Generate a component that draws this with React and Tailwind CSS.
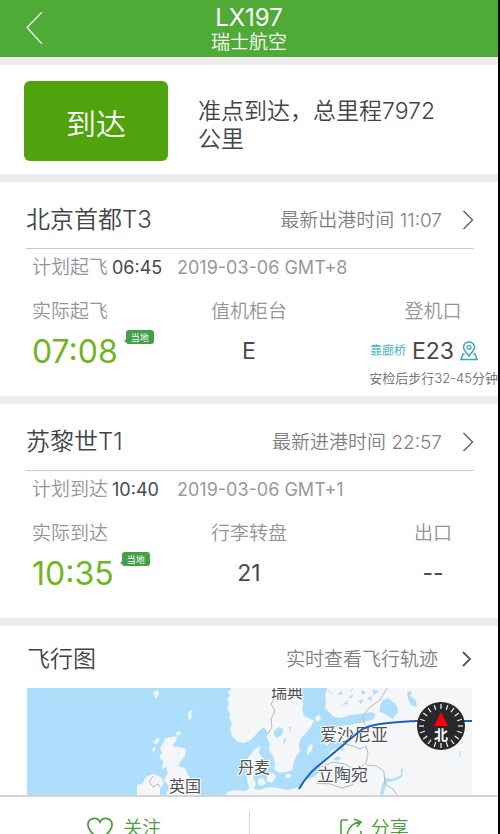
const fontStack = 'font-["Inter","Noto_Sans_CJK_SC",sans-serif]';

function Chevron() {
  return (
    <svg className="h-5 w-3 shrink-0" viewBox="0 0 12 20" fill="none" stroke="#66666a" strokeWidth="1.5">
      <path d="M1.5 1 10.5 10 1.5 19" />
    </svg>
  );
}

function LocalTag() {
  return (
    <span className="relative mt-1 flex h-[14px] w-7 items-center justify-center rounded-[3px] bg-[#43a047] text-[9px] font-normal leading-none text-white">
      <svg className="absolute -left-0.5 bottom-0 h-2 w-2" viewBox="0 0 8 8" fill="#43a047">
        <path d="M3 0 2.500 3 0 5 3 7 4 8H8V0Z" />
      </svg>
      <span className="relative">当地</span>
    </span>
  );
}

function PinIcon() {
  return (
    <svg className="h-5 w-[18px] shrink-0" viewBox="0 0 18 20" fill="none" stroke="#38a6bb" strokeWidth="1.5">
      <path d="M9 15C6.500 11.500 3.500 9 3.500 6.200a5.500 5.200 0 0 1 11 0C14.500 9 11.500 11.500 9 15Z" />
      <circle cx="9" cy="6.300" r="2" strokeWidth="1.200" />
      <path d="M4.500 13H3L1 18.500H17L15 13h-1.500" />
    </svg>
  );
}

function AirportSection({ airport, latestLabel, latest, planLabel, plan, date, actualLabel, actual, middleLabel, middle, lastLabel, children }) {
  return (
    <section className="flex h-[214px] shrink-0 flex-col bg-white">
      <div className="mx-[26px] mr-6 flex h-[67px] items-center border-b border-[#c9c9cb] pt-[10px]">
        <h2 className="text-[24px] leading-8 text-[#444446]">{airport}</h2>
        <a href="#latest" className="ml-auto flex items-center gap-5 text-[19px] leading-7 text-[#808084]">
          <span className="pt-0.5">{latestLabel} <span>{latest}</span></span>
          <Chevron />
        </a>
      </div>
      <p className="flex items-center pl-8 pt-[5px] text-[19px] leading-7 text-[#949498]">
        <span>{planLabel}</span>
        <time className="ml-1 w-[65px] text-[18px] font-normal text-[#48484a]">{plan}</time>
        <span className="text-[18px] font-normal text-[#98989c]">{date}</span>
      </p>
      <dl className="grid grid-cols-3 pt-4">
        <div className="pl-8">
          <dt className="text-[19px] leading-7 text-[#949498]">{actualLabel}</dt>
          <dd className="flex text-[32px] font-normal leading-[52px] text-[#6fb521]">
            <span className="mr-2">{actual}</span>
            <LocalTag />
          </dd>
        </div>
        <div className="text-center">
          <dt className="text-[19px] leading-7 text-[#949498]">{middleLabel}</dt>
          <dd className="text-[23px] font-normal leading-[50px] text-[#48484a]">{middle}</dd>
        </div>
        <div className="pl-9">
          <dt className="text-center text-[19px] leading-7 text-[#949498]">{lastLabel}</dt>
          <dd className="text-center text-[23px] font-normal leading-[50px] text-[#48484a]">{children}</dd>
        </div>
      </dl>
    </section>
  );
}

function FlightMap() {
  const ticks = Array.from({ length: 20 }, (_, i) => i * 18);
  return (
    <svg className="block h-[107px] w-full" viewBox="27 688 445 107" preserveAspectRatio="xMidYMid slice" role="img" aria-label="飞行图">
      <rect x="27" y="688" width="445" height="107" fill="#addffd" />
      <g fill="#f5f6f8">
        <path d="M232 688 228 692 230 696 227 699 229 704 227 708 230 714 229 718 232 723 230 730 232 736 237 741 243 743 249 741 254 737 259 731 264 727 267 731 267 738 270 744 269 750 273 756 275 763 274 769 279 773 286 772 292 770 294 762 296 756 300 751 299 744 301 738 306 733 310 728 314 721 309 718 305 717 302 710 303 704 301 698 302 688Z" />
        <path d="M327 688 325 696 326 702 325 708 330 713 334 717 341 718 350 715 361 714 372 712 376 715 372 720 360 723 350 725 338 726 330 730 327 734 332 739 340 740 344 745 343 751 336 748 331 751 326 758 321 764 319 773 314 777 306 780 299 787 288 790 278 788 270 787 258 790 250 788 245 791 235 790 228 792 225 795H472V688Z" />
        <path d="M248 758 254 750 260 746 259 754 263 758 260 766 254 772 253 778 256 784 253 790 250 789 247 780 247 770ZM258 779 263 778 266 783 262 786 258 784ZM267 775 273 773 276 777 272 783 267 781ZM286 774 291 774 290 778 286 778Z" />
        <path d="M166 738 177 736 176 741 172 746 179 747 186 749 185 756 181 761 178 766 185 768 188 775 192 780 198 789 201 795H166L169 786 164 780 168 773 166 767 162 769 163 761 159 757 162 753 160 748Z" />
        <path d="M137 785 142 784 146 777 153 774 161 777 164 783 160 788 160 795H137Z" />
        <path d="M153 743 157 738 160 739 157 744ZM152 749 156 746 154 753ZM176 733 179 731 181 734 177 736ZM188 714 190 711 193 709 191 714 192 717 189 721ZM153 692 158 690 159 694 156 699Z" />
        <path d="M307 752 308 747 311 744 313 746 311 751 308 755ZM315 717 319 715 321 719 317 722ZM325 740 328 738 330 743 326 746Z" />
      </g>
      <g fill="#addffd">
        <path d="M380 706 383 700 388 698 393 702 397 706 398 712 393 719 385 714 380 712ZM407 692 412 691 410 696 416 700 417 707 411 705 408 699ZM274 731 279 727 283 729 282 735 277 738 274 735ZM283 743 285 737 286 739 284 745ZM289 727 291 727 290 734ZM333 759 338 756 341 758 337 761Z" />
        <path d="M337 694 342 691 342 695ZM348 698 353 694 352 698ZM342 705 347 701 348 704ZM361 690 366 692 362 695ZM358 701 364 699 361 704ZM367 698 372 696 371 701ZM372 690 379 691 374 695Z" />
        <path d="M380 795 382 785 385 779 382 774 385 778 393 779 401 775 401 769 403 768 402 777 394 781 387 782 383 795Z" />
      </g>
      <g fill="none" stroke="#b7b7bd" strokeWidth="1">
        <path d="M273 690 274 699 271 704 275 711 271 719 272 727 267 735" />
        <path d="M387 688 380 700 370 707 362 717 365 725" />
        <path d="M345 744 353 746 360 749 366 746 368 754 366 763 359 768M321 767 333 762 345 764 352 768 357 776 352 785 342 788 330 784 316 783M366 765 377 766 384 772 385 784 393 789 397 795" />
        <path d="M153 776 149 782 153 787 158 784 160 787" />
      </g>
      <path d="M460 751V757M327 690 333 694M355 686 350 691" stroke="#addffd" />
      <g className='font-["Noto_Sans_CJK_SC",sans-serif] font-normal' fill="#505054" stroke="#ffffff" strokeWidth="2" paintOrder="stroke" fontSize="16">
        <text x="271" y="698">瑞典</text>
        <text x="320" y="741" fontSize="17">爱沙尼亚</text>
        <text x="238" y="773">丹麦</text>
        <text x="317" y="781" fontSize="17">立陶宛</text>
        <text x="169" y="792">英国</text>
      </g>
      <path d="M299 789C307 775 314 769 323 762C341 747 350 739 360 731C368 724 387 723 415 721H472" fill="none" stroke="#1764bd" strokeWidth="2" />
      <circle cx="441" cy="726" r="24" fill="#29292b" />
      <g stroke="#f5f5f5" strokeWidth="1.200">
        {ticks.map((angle) => (
          <path key={angle} d="M441 704V709" transform={`rotate(${angle} 441 726)`} />
        ))}
      </g>
      <path d="M441 712 448 726H434Z" fill="#fb0008" />
      <text x="441" y="740" className='font-["Noto_Sans_CJK_SC",sans-serif] font-bold' textAnchor="middle" fontSize="14" fill="#fff">北</text>
    </svg>
  );
}

export default function App() {
  return (
    <div className="h-screen overflow-hidden bg-black">
      <div className={`mr-[2px] flex h-full flex-col overflow-hidden bg-[#efecf0] font-[350] ${fontStack}`}>
        <header className="relative flex h-[57px] shrink-0 flex-col items-center bg-[#50aa38] pt-1 text-white">
          <button type="button" aria-label="返回" className="absolute left-6 top-3">
            <svg className="h-8 w-5" viewBox="0 0 20 32" fill="none" stroke="#fff" strokeWidth="1.200">
              <path d="M18 0 3 15.500 18 32" />
            </svg>
          </button>
          <h1 className="text-[24px] font-normal leading-7">LX197</h1>
          <p className="text-[19px] leading-[22px]">瑞士航空</p>
        </header>

        <main className="flex min-h-0 flex-1 flex-col gap-2 overflow-hidden pt-2">
          <section className="flex h-[109px] shrink-0 items-center gap-[30px] bg-white pl-6 pr-12 pt-0.5">
            <strong className="flex h-20 w-36 shrink-0 items-center justify-center rounded-md bg-[#50a30c] pt-2 text-[30px] font-[350] text-white">到达</strong>
            <p className="pt-2 text-[23px] leading-7 text-[#444446]">准点到达，总里程7972公里</p>
          </section>

          <AirportSection
            airport="北京首都T3"
            latestLabel="最新出港时间"
            latest="11:07"
            planLabel="计划起飞"
            plan="06:45"
            date="2019-03-06 GMT+8"
            actualLabel="实际起飞"
            actual="07:08"
            middleLabel="值机柜台"
            middle="E"
            lastLabel="登机口"
          >
            <span className="flex items-center justify-end gap-[6px] pr-5">
              <span className="text-[12px] text-[#45b3c7]">靠廊桥</span>
              <span>E23</span>
              <PinIcon />
            </span>
            <small className="-mt-1.5 flex justify-end whitespace-nowrap text-[13px] font-[350] leading-4 text-[#68686c]">安检后步行32-45分钟</small>
          </AirportSection>

          <AirportSection
            airport="苏黎世T1"
            latestLabel="最新进港时间"
            latest="22:57"
            planLabel="计划到达"
            plan="10:40"
            date="2019-03-06 GMT+1"
            actualLabel="实际到达"
            actual="10:35"
            middleLabel="行李转盘"
            middle="21"
            lastLabel="出口"
          >
            --
          </AirportSection>

          <section className="flex min-h-0 flex-1 flex-col bg-white pl-[27px] pr-[26px]">
            <div className="flex h-[62px] shrink-0 items-center pt-1">
              <h2 className="text-[23px] leading-8 text-[#444446]">飞行图</h2>
              <a href="#track" className="ml-auto flex items-center gap-6 text-[19px] text-[#808084]">
                <span className="pt-0.5">实时查看飞行轨迹</span>
                <svg className="h-4 w-[10px]" viewBox="0 0 10 16" fill="none" stroke="#555559" strokeWidth="1.800">
                  <path d="M1 1 8 8 1 15" />
                </svg>
              </a>
            </div>
            <FlightMap />
          </section>
        </main>

        <footer className="-mb-7 flex h-[67px] shrink-0 items-stretch border-t-2 border-[#d5d3d7] bg-white text-[19px] text-[#4c9f3c]">
          <button type="button" className="flex flex-1 items-center justify-center gap-[10px]">
            <svg className="h-[26px] w-[26px]" viewBox="0 0 26 26" fill="none" stroke="currentColor" strokeWidth="1.800">
              <path d="M13 23C9 20 1 14 1 8A6.300 6.300 0 0 1 13 5A6.300 6.300 0 0 1 25 8C25 14 17 20 13 23Z" />
            </svg>
            关注
          </button>
          <span className="mt-[14px] w-px bg-[#d5d3d7]" />
          <button type="button" className="flex flex-1 items-center justify-center gap-2">
            <svg className="h-[26px] w-6" viewBox="0 0 24 26" fill="none" stroke="currentColor" strokeWidth="1.600">
              <path d="M9 3H4Q2 3 2 5V24H22V14M8 19C9 11 13 6 21 5M15 2 22 5 18 10" />
            </svg>
            分享
          </button>
        </footer>
      </div>
    </div>
  );
}
